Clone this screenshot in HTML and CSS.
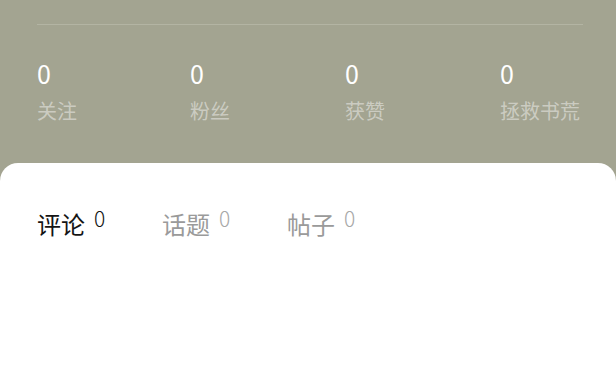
FILE: index.html
```html
<!DOCTYPE html>
<html lang="zh">
<head>
<meta charset="utf-8">
<link rel="stylesheet" href="styles.css">
</head>
<body>
<div class="page">
  <div class="header">
    <div class="divider"></div>
    <div class="stats">
      <div class="stat"><div class="num">0</div><div class="label">关注</div></div>
      <div class="stat"><div class="num">0</div><div class="label">粉丝</div></div>
      <div class="stat"><div class="num">0</div><div class="label">获赞</div></div>
      <div class="stat"><div class="num">0</div><div class="label">拯救书荒</div></div>
    </div>
  </div>
  <div class="card">
    <div class="tabs">
      <div class="tab active">评论<span class="count">0</span></div>
      <div class="tab">话题<span class="count">0</span></div>
      <div class="tab">帖子<span class="count">0</span></div>
    </div>
  </div>
</div>
</body>
</html>
```
FILE: styles.css
```css
html, body {
  margin: 0;
  padding: 0;
  height: 100%;
}
body {
  background: #a3a491;
  font-family: "Noto Sans CJK SC", "Noto Sans", sans-serif;
  overflow: hidden;
}
.page {
  display: flex;
  flex-direction: column;
  height: 100%;
}
.header {
  padding: 0 33px 0 37px;
}
.divider {
  margin-top: 24px;
  height: 1px;
  background: #b3b4a3;
}
.stats {
  display: grid;
  grid-template-columns: 153px 155px 155px auto;
  margin-top: 34px;
}
.stat {
  display: flex;
  flex-direction: column;
}
.num {
  color: #ffffff;
  font-size: 25px;
  line-height: 28px;
}
.label {
  color: rgba(255, 255, 255, 0.45);
  font-size: 20px;
  line-height: 24px;
  margin-top: 12px;
}
.card {
  flex: 1;
  margin-top: 40px;
  background: #ffffff;
  border-radius: 18px 18px 0 0;
}
.tabs {
  display: flex;
  padding: 44px 0 0 37px;
}
.tab {
  color: #9a9a9a;
  font-size: 24px;
  line-height: 34px;
  width: 125px;
  display: flex;
  align-items: flex-start;
}
.tab.active {
  color: #141414;
}
.count {
  font-size: 21px;
  font-weight: 300;
  line-height: 21px;
  margin-left: 9px;
  margin-top: 1px;
}
.tab .count {
  color: #a8a8a8;
}
.tab.active .count {
  color: #141414;
}
```
